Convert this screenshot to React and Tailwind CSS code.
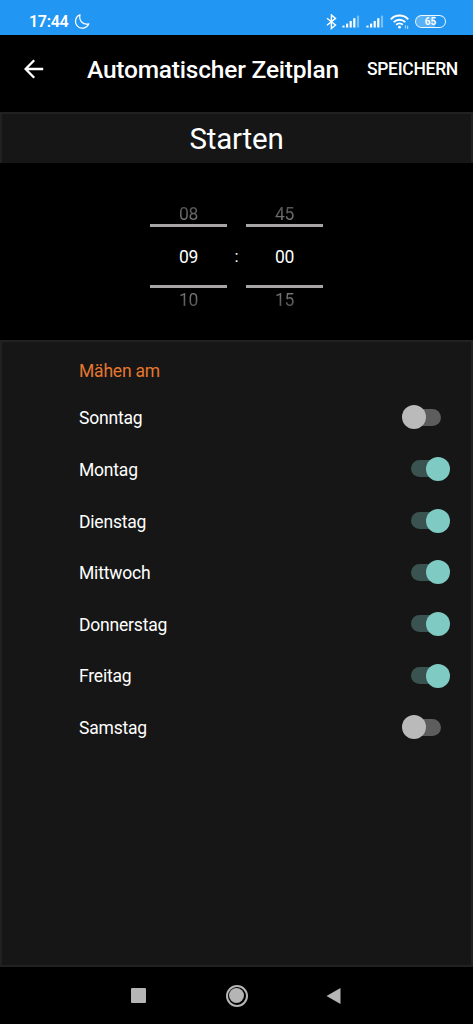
import { useState } from 'react';

const initialDays = [
    { name: 'Sonntag', enabled: false },
    { name: 'Montag', enabled: true },
    { name: 'Dienstag', enabled: true },
    { name: 'Mittwoch', enabled: true },
    { name: 'Donnerstag', enabled: true },
    { name: 'Freitag', enabled: true },
    { name: 'Samstag', enabled: false },
];

const SignalIcon = () => (
    <svg className="h-[13px] w-[18px]" viewBox="0 0 18 13" fill="white">
        <rect x="0.4" y="10.6" width="2.2" height="1.9" />
        <rect x="4" y="8.6" width="2.2" height="3.9" />
        <rect x="7.6" y="6" width="2.2" height="6.5" />
        <rect x="11.2" y="3.2" width="2.2" height="9.3" />
        <rect x="14.9" y="0.6" width="2.2" height="11.9" opacity="0.4" />
    </svg>
);

const StatusBar = () => (
    <div className="flex h-[35px] items-center bg-[#2296f3] pt-2 pl-[29px] pr-[27px] text-white">
        <span className="w-[45px] pt-px text-[16px] leading-none font-semibold tracking-[-0.3px]">17:44</span>
        <svg className="h-4 w-4" viewBox="0 0 16 16" fill="none" stroke="white" strokeWidth="1.2" strokeLinejoin="round">
            <path d="M6 0.8A6.9 6.9 0 1 0 14.8 9.8C9.5 11.5 4.6 7 6 0.8Z" />
        </svg>
        <div className="ml-auto flex items-center">
            <svg className="h-4 w-[11px]" viewBox="0 0 11 16" fill="none" stroke="white" strokeWidth="1.4">
                <path d="M1 4.2L9.5 11L5.4 14.5V0.9L9.5 4.4L1 11.2" />
            </svg>
            <span className="ml-[5px]"><SignalIcon /></span>
            <span className="ml-[6px]"><SignalIcon /></span>
            <svg className="ml-[6px] h-4 w-[20px]" viewBox="0 0 20 16" fill="none" stroke="white" strokeWidth="1.9">
                <path d="M0.8 5.3A12 12 0 0 1 18.2 5.3" />
                <path d="M3.7 8.2A8.2 8.2 0 0 1 15.3 8.2" />
                <path d="M6.2 10.8A4.8 4.8 0 0 1 12.8 10.8" />
                <circle cx="9.5" cy="13.2" r="1.4" fill="white" stroke="none" />
                <path d="M15.5 14.5V11.3M17.6 11.8V15" strokeWidth="1.2" opacity="0.6" />
            </svg>
            <div className="ml-[5px] flex h-[13.5px] w-[31px] items-center justify-center rounded-full border-[1.5px] border-white/90 bg-[linear-gradient(to_right,#5bb1f6_65%,#2296f3_65%)] text-[10px] leading-none font-bold">
                65
            </div>
        </div>
    </div>
);

const NumberWheel = ({ values }) => {
    const [previous, current, next] = values;

    return (
        <div className="flex w-[77px] flex-col items-center text-[17.5px] leading-5 tracking-[-0.3px]">
            <div className="bg-linear-to-b from-[#4c4c4c] to-[#818181] bg-clip-text text-transparent">{previous}</div>
            <div className="flex h-[64px] w-full items-center justify-center border-y-[3px] border-[#a7a5a6] pt-px text-white">
                {current}
            </div>
            <div className="mt-[2px] bg-linear-to-b from-[#818181] to-[#4c4c4c] bg-clip-text text-transparent">{next}</div>
        </div>
    );
};

const DaySwitch = ({ enabled, label, onChange }) => (
    <button
        type="button"
        role="switch"
        aria-checked={enabled}
        aria-label={label}
        onClick={onChange}
        className="relative mb-px flex h-6 w-12 items-center justify-center"
    >
        <span className={`h-[17px] w-[30px] ${enabled ? 'rounded-l-full bg-[#3a5350]' : 'rounded-r-full bg-[#5d5d5d]'}`} />
        <span className={`absolute top-0 h-6 w-6 rounded-full ${enabled ? 'right-0 bg-[#7fcac3]' : 'left-0 bg-[#bababa]'}`} />
    </button>
);

export default function App() {
    const [days, setDays] = useState(initialDays);

    const toggleDay = (name) => {
        setDays(days.map(day => day.name === name ? { ...day, enabled: !day.enabled } : day));
    };

    return (
        <div className="flex h-screen w-full flex-col overflow-hidden bg-black font-[Roboto,sans-serif]">
            <StatusBar />

            <header className="flex h-[77px] items-center pr-[15px] pb-[8px] pl-[24px] text-white">
                <button type="button" aria-label="Zurück" className="pb-[2px]">
                    <svg className="h-5 w-5" viewBox="0 0 20 20" fill="none" stroke="white" strokeWidth="2.3">
                        <path d="M19.2 10H2M10.2 1.2L1.6 10L10.2 18.8" />
                    </svg>
                </button>
                <h1 className="ml-[43px] pt-px text-[24.5px] leading-none font-medium tracking-[-0.2px] whitespace-nowrap">Automatischer Zeitplan</h1>
                <button type="button" className="ml-auto pt-px text-[17.5px] leading-none font-medium tracking-[-0.3px]">SPEICHERN</button>
            </header>

            <h2 className="flex h-[51px] items-center justify-center border-x-2 border-t-2 border-[#212121] bg-[#161616] pt-[3px] text-[29.5px] leading-none tracking-[-0.2px] text-white">
                Starten
            </h2>

            <div className="flex h-[177px] justify-center pt-[41px]">
                <NumberWheel values={['08', '09', '10']} />
                <div className="w-[19px] pt-[42px] text-center text-[17px] leading-5 text-white">:</div>
                <NumberWheel values={['45', '00', '15']} />
            </div>

            <main className="flex-1 border-2 border-[#212121] bg-[#161616] pr-[21px] pl-[77px] text-[17.5px] tracking-[-0.2px] text-white">
                <h3 className="flex h-[50px] items-center pt-[9px] text-[#e5772f]">Mähen am</h3>
                {days.map((day) => (
                    <div key={day.name} className="flex h-[51.67px] items-center justify-between">
                        <span className="pt-px">{day.name}</span>
                        <DaySwitch enabled={day.enabled} label={day.name} onChange={() => toggleDay(day.name)} />
                    </div>
                ))}
            </main>

            <nav className="flex h-[57px] items-center justify-between pr-[132px] pl-[131px]">
                <button type="button" aria-label="Letzte Apps" className="h-[15px] w-[15px] rounded-[1px] bg-[#b5b5b5]" />
                <button type="button" aria-label="Startseite" className="ml-px flex h-[22px] w-[22px] items-center justify-center rounded-full border-2 border-[#b5b5b5]">
                    <span className="h-[15px] w-[15px] rounded-full bg-[#b5b5b5]" />
                </button>
                <button type="button" aria-label="Zurück">
                    <svg className="h-4 w-[15px]" viewBox="0 0 15 16" fill="#b5b5b5">
                        <path d="M14.5 0V16L0.5 8Z" />
                    </svg>
                </button>
            </nav>
        </div>
    );
}
